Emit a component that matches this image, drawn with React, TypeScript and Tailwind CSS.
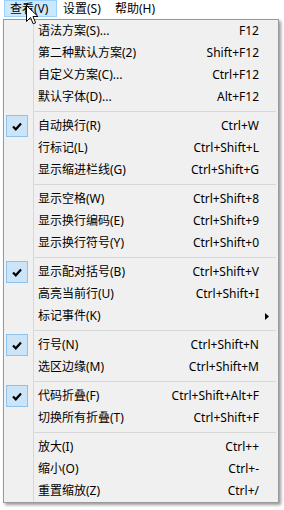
type Entry =
  | { label: string; shortcut?: string; checked?: boolean; submenu?: boolean }
  | "sep";

const entries: Entry[] = [
  { label: "语法方案(S)...", shortcut: "F12" },
  { label: "第二种默认方案(2)", shortcut: "Shift+F12" },
  { label: "自定义方案(C)...", shortcut: "Ctrl+F12" },
  { label: "默认字体(D)...", shortcut: "Alt+F12" },
  "sep",
  { label: "自动换行(R)", shortcut: "Ctrl+W", checked: true },
  { label: "行标记(L)", shortcut: "Ctrl+Shift+L" },
  { label: "显示缩进栏线(G)", shortcut: "Ctrl+Shift+G" },
  "sep",
  { label: "显示空格(W)", shortcut: "Ctrl+Shift+8" },
  { label: "显示换行编码(E)", shortcut: "Ctrl+Shift+9" },
  { label: "显示换行符号(Y)", shortcut: "Ctrl+Shift+0" },
  "sep",
  { label: "显示配对括号(B)", shortcut: "Ctrl+Shift+V", checked: true },
  { label: "高亮当前行(U)", shortcut: "Ctrl+Shift+I" },
  { label: "标记事件(K)", submenu: true },
  "sep",
  { label: "行号(N)", shortcut: "Ctrl+Shift+N", checked: true },
  { label: "选区边缘(M)", shortcut: "Ctrl+Shift+M" },
  "sep",
  { label: "代码折叠(F)", shortcut: "Ctrl+Shift+Alt+F", checked: true },
  { label: "切换所有折叠(T)", shortcut: "Ctrl+Shift+F" },
  "sep",
  { label: "放大(I)", shortcut: "Ctrl++" },
  { label: "缩小(O)", shortcut: "Ctrl+-" },
  { label: "重置缩放(Z)", shortcut: "Ctrl+/" },
];

const CheckBox = () => (
  <div className="ml-[2px] flex h-[22px] w-[22px] items-center justify-center border border-[#8cc2ec] bg-[#cce4f7]">
    <svg width="10" height="9" viewBox="0 0 10 9">
      <path d="M1 4.5 L3.8 7.3 L9 1.5" fill="none" stroke="#000" strokeWidth="2.2" />
    </svg>
  </div>
);

const Row = ({ entry }: { entry: Exclude<Entry, "sep"> }) => (
  <div className="flex h-[22px] items-center">
    <div className="flex h-full w-[30px] items-center border-r border-[#d7d7d7]">
      {entry.checked && <CheckBox />}
    </div>
    <div className="ml-[4px] flex-1 whitespace-nowrap">{entry.label}</div>
    <div className="flex w-[110px] items-center justify-end whitespace-nowrap pr-[19px]">
      {entry.shortcut}
      {entry.submenu && (
        <svg width="4" height="7" viewBox="0 0 4 7" className="-mr-[10px]">
          <path d="M0 0 L4 3.5 L0 7 Z" fill="#000" />
        </svg>
      )}
    </div>
  </div>
);

const Separator = () => (
  <div className="flex h-[7px]">
    <div className="h-full w-[30px] border-r border-[#d7d7d7]" />
    <div className="mr-[2px] flex flex-1 items-center">
      <div className="h-px w-full bg-[#d7d7d7]" />
    </div>
  </div>
);

export default function App() {
  return (
    <div
      className="relative h-[510px] w-[284px] overflow-hidden bg-white text-[12px] leading-[16px] text-black"
      style={{ fontFamily: '"Noto Sans", "Noto Sans CJK SC", sans-serif' }}
    >
      {/* menu bar */}
      <div className="flex h-[19px] pl-[4px]">
        <div className="flex h-[17px] w-[53px] items-center border border-[#99d1ff] bg-[#cce8ff] pl-[5px]">
          查看(V)
        </div>
        <div className="flex h-[17px] w-[52px] items-center pl-[6px]">设置(S)</div>
        <div className="flex h-[17px] w-[60px] items-center pl-[6px]">帮助(H)</div>
      </div>

      {/* dropdown */}
      <div className="ml-[3px] w-[276px] border border-[#999999] bg-[#f0f0f0] shadow-[2px_2px_3px_rgba(0,0,0,0.4)]">
        {entries.map((e, i) =>
          e === "sep" ? <Separator key={i} /> : <Row key={i} entry={e} />
        )}
      </div>

      {/* mouse cursor */}
      <svg
        width="13"
        height="20"
        viewBox="0 0 13 20"
        className="absolute left-[26px] top-[5px]"
      >
        <path
          d="M0.5 0.5 L0.5 16.5 L4.5 12.5 L7.2 18.8 L9.6 17.8 L7 11.5 L12 11.5 Z"
          fill="#fff"
          stroke="#000"
          strokeWidth="1"
        />
      </svg>
    </div>
  );
}
